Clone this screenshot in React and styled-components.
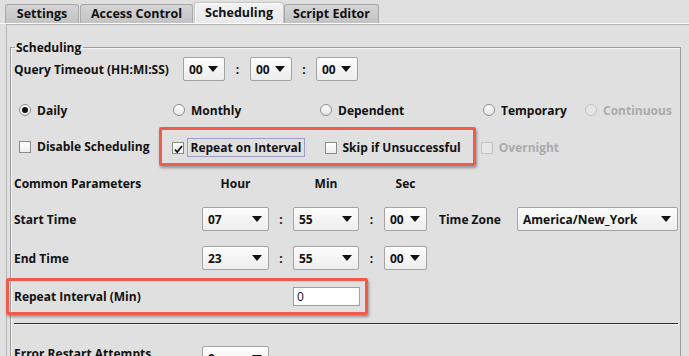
import React from 'react'
import { styled, createGlobalStyle } from "styled-components";

const GlobalStyle = createGlobalStyle`
  html, body {
    margin: 0;
    padding: 0;
    background: #e0e0e0;
  }
  body {
    font-family: "Open Sans", "DejaVu Sans", sans-serif;
    font-size: 12px;
    font-weight: 700;
    color: #111;
  }
`;

const Page = styled.div`
  width: 689px;
  height: 356px;
  overflow: hidden;
  background: #e0e0e0;
`;

const TabBar = styled.div`
  display: flex;
  align-items: flex-end;
  height: 23px;
  padding-left: 5px;
  border-bottom: 1px solid #fbfbfb;
`;

const Tab = styled.div`
  display: flex;
  align-items: center;
  justify-content: center;
  box-sizing: border-box;
  width: ${(p) => p.$w}px;
  height: ${(p) => (p.$active ? 21 : 19)}px;
  margin-right: ${(p) => (p.$active ? 0 : 1)}px;
  padding-top: 1px;
  border: 1px solid ${(p) => (p.$active ? "#c4c4c4" : "#a9a9a9")};
  border-bottom: none;
  border-radius: 3px 3px 0 0;
  background: ${(p) =>
    p.$active
      ? "linear-gradient(#f2f2f2, #e9e9e9)"
      : "linear-gradient(#d4d4d4, #c3c3c3)"};
  box-shadow: ${(p) => (p.$active ? "inset 1px 1px 0 #fff" : "none")};
  font-size: 12.5px;
  line-height: 1;
`;

const Panel = styled.div`
  margin-left: 6px;
  border-top: 1px solid #b4b4b4;
  border-left: 1px solid #b8b8b8;
  padding: 15px 0 0 3px;
  height: 400px;
`;

const Group = styled.fieldset`
  margin: 0;
  width: 664px;
  padding: 0 2px 0 3px;
  border: 1px solid #9c9c9c;
  border-bottom: none;
  box-shadow: inset 1px 1px 0 #f4f4f4;
  min-width: 0;
`;

const Legend = styled.legend`
  padding: 0 2px 0 1px;
  margin-left: 1px;
  line-height: 15px;
`;

const Row = styled.div`
  display: flex;
  align-items: center;
  height: ${(p) => p.$h}px;
  margin-top: ${(p) => p.$mt}px;
`;

const Label = styled.span`
  width: ${(p) => p.$w}px;
  flex-shrink: 0;
  white-space: nowrap;
`;

const Colon = styled.span`
  width: ${(p) => p.$w}px;
  text-align: center;
  flex-shrink: 0;
`;

const Combo = styled.div`
  display: flex;
  align-items: center;
  justify-content: space-between;
  box-sizing: border-box;
  width: ${(p) => p.$w}px;
  height: 24px;
  padding: 0 6px 0 5px;
  flex-shrink: 0;
  border: 1px solid #a3a3a3;
  border-radius: 2px;
  background: linear-gradient(#fdfdfd, #ededed);
  box-shadow: inset 0 1px 0 #fff;
`;

const Arrow = () => (
  <svg width="10" height="6" viewBox="0 0 10 6">
    <polygon points="0,0 10,0 5,6" fill="#111" />
  </svg>
);

const OptionGrid = styled.div`
  display: grid;
  grid-template-columns: 154px 147px 163px 102px auto;
  align-items: center;
  height: 20px;
  margin-top: 19px;
  padding-left: 5px;
`;

const Option = styled.label`
  display: flex;
  align-items: center;
  gap: 6px;
  white-space: nowrap;
  color: ${(p) => (p.$disabled ? "#ababab" : "#111")};
`;

const Radio = styled.span`
  box-sizing: border-box;
  width: 12px;
  height: 12px;
  border-radius: 50%;
  border: 1px solid ${(p) => (p.$disabled ? "#c2c2c2" : "#8e8e8e")};
  background: ${(p) =>
    p.$disabled ? "#e6e6e6" : "linear-gradient(#ffffff, #e4e4e4)"};
  display: flex;
  align-items: center;
  justify-content: center;
  &::after {
    content: "";
    display: ${(p) => (p.$checked ? "block" : "none")};
    width: 6px;
    height: 6px;
    border-radius: 50%;
    background: #111;
  }
`;

const Check = styled.span`
  position: relative;
  box-sizing: border-box;
  width: 12px;
  height: 12px;
  flex-shrink: 0;
  border: 1px solid ${(p) => (p.$disabled ? "#c2c2c2" : "#8a8a8a")};
  background: ${(p) =>
    p.$disabled ? "#e6e6e6" : "linear-gradient(#ffffff, #eeeeee)"};
  svg {
    position: absolute;
    left: 1px;
    top: 2px;
  }
`;

const CheckRow = styled.div`
  display: flex;
  align-items: center;
  height: 39px;
  margin-top: 7px;
  padding-left: 5px;
`;

const Highlight = styled.div`
  display: flex;
  align-items: center;
  box-sizing: border-box;
  border: 3px solid #f25a4b;
  border-radius: 2px;
  box-shadow: 1px 2px 3px rgba(0, 0, 0, 0.35);
`;

const CheckGroup = styled(Highlight)`
  height: 39px;
  margin-left: 10px;
  padding: 2px 12px 0 10px;
  gap: 20px;
`;

const Focus = styled.span`
  padding: 0 2px;
  margin-left: -3px;
  border: 1px solid #9c9cc4;
`;

const TimeRow = styled.div`
  display: grid;
  grid-template-columns: 188px 67px 24px 66px 25px 43px 12px auto 12px 161px;
  align-items: ${(p) => p.$align || "center"};
  height: ${(p) => p.$h}px;
  margin-top: ${(p) => p.$mt}px;
  white-space: nowrap;
`;

const Head = styled.span`
  text-align: center;
`;

const IntervalRow = styled(Highlight)`
  height: 37px;
  margin: 8px 0 0 -8px;
  width: 362px;
  padding-left: 5px;
`;

const NumberInput = styled.div`
  box-sizing: border-box;
  width: 67px;
  height: 19px;
  border: 1px solid #9e9e9e;
  background: #fff;
  padding-left: 3px;
  font-weight: 400;
  line-height: 17px;
`;

const Divider = styled.div`
  margin: 8px 0 0 0;
  border-top: 1px solid #2c2c2c;
  border-bottom: 1px solid #f2f2f2;
`;

const CheckMark = () => (
  <svg width="9" height="8" viewBox="0 0 9 8">
    <path d="M1 4.5 L3.2 7 L8 1" stroke="#111" strokeWidth="1.8" fill="none" />
  </svg>
);

const CheckOption = ({ label, checked, disabled, focus }) => (
  <Option $disabled={disabled}>
    <Check $disabled={disabled}>{checked && <CheckMark />}</Check>
    {focus ? <Focus>{label}</Focus> : label}
  </Option>
);

const App = () => {
  return (
    <Page>
      <GlobalStyle />
      <TabBar>
        <Tab $w={74}>Settings</Tab>
        <Tab $w={113}>Access Control</Tab>
        <Tab $w={90} $active>Scheduling</Tab>
        <Tab $w={95}>Script Editor</Tab>
      </TabBar>
      <Panel>
        <Group>
          <Legend>Scheduling</Legend>

          <Row $h={24} $mt={2}>
            <Label $w={169}>Query Timeout (HH:MI:SS)</Label>
            <Combo $w={42}>00<Arrow /></Combo>
            <Colon $w={25}>:</Colon>
            <Combo $w={42}>00<Arrow /></Combo>
            <Colon $w={24}>:</Colon>
            <Combo $w={42}>00<Arrow /></Combo>
          </Row>

          <OptionGrid>
            <Option><Radio $checked />Daily</Option>
            <Option><Radio />Monthly</Option>
            <Option><Radio />Dependent</Option>
            <Option><Radio />Temporary</Option>
            <Option $disabled><Radio $disabled />Continuous</Option>
          </OptionGrid>

          <CheckRow>
            <CheckOption label="Disable Scheduling" />
            <CheckGroup>
              <CheckOption label="Repeat on Interval" checked focus />
              <CheckOption label="Skip if Unsuccessful" />
            </CheckGroup>
            <Option $disabled style={{ marginLeft: 5, paddingTop: 2 }}>
              <Check $disabled />Overnight
            </Option>
          </CheckRow>

          <TimeRow $h={16} $mt={9}>
            <span>Common Parameters</span>
            <Head>Hour</Head>
            <span />
            <Head>Min</Head>
            <span />
            <Head>Sec</Head>
          </TimeRow>

          <TimeRow $h={24} $mt={16}>
            <span>Start Time</span>
            <Combo $w={67}>07<Arrow /></Combo>
            <Colon>:</Colon>
            <Combo $w={66}>55<Arrow /></Combo>
            <Colon>:</Colon>
            <Combo $w={43}>00<Arrow /></Combo>
            <span />
            <span>Time Zone</span>
            <span />
            <Combo $w={161}>America/New_York<Arrow /></Combo>
          </TimeRow>

          <TimeRow $h={24} $mt={15}>
            <span>End Time</span>
            <Combo $w={67}>23<Arrow /></Combo>
            <Colon>:</Colon>
            <Combo $w={66}>55<Arrow /></Combo>
            <Colon>:</Colon>
            <Combo $w={43}>00<Arrow /></Combo>
          </TimeRow>

          <IntervalRow>
            <Label $w={279}>Repeat Interval (Min)</Label>
            <NumberInput>0</NumberInput>
          </IntervalRow>

          <Divider />

          <TimeRow $h={24} $mt={21} $align="start">
            <span style={{ marginTop: -1 }}>Error Restart Attempts</span>
            <Combo $w={67}>0<Arrow /></Combo>
          </TimeRow>
        </Group>
      </Panel>
    </Page>
  );
}

export default App
